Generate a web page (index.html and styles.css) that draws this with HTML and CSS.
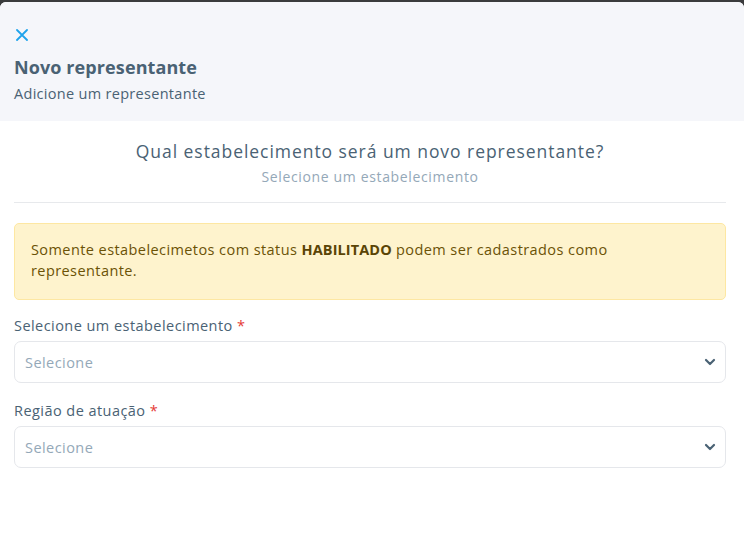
FILE: index.html
```html
<!DOCTYPE html>
<html>
<head>
    <title>Novo representante</title>
    <meta charset="UTF-8">
    <meta name="viewport" content="width=device-width, initial-scale=1.0">
    <link rel="stylesheet" href="styles.css">
</head>
<body>
    <div class="modal">
        <div class="modal-header">
            <button class="close-btn" aria-label="Fechar">
                <svg width="12" height="12" viewBox="0 0 12 12">
                    <path d="M1 1L11 11M11 1L1 11" stroke="currentColor" stroke-width="1.8" stroke-linecap="round"/>
                </svg>
            </button>
            <h1 class="modal-title">Novo representante</h1>
            <p class="modal-subtitle">Adicione um representante</p>
        </div>

        <div class="modal-body">
            <div class="step-head">
                <h2>Qual estabelecimento será um novo representante?</h2>
                <p>Selecione um estabelecimento</p>
            </div>

            <p class="alert">Somente estabelecimetos com status <strong>HABILITADO</strong> podem ser cadastrados como representante.</p>

            <div class="field">
                <label>Selecione um estabelecimento <span class="req">*</span></label>
                <div class="select">
                    <span>Selecione</span>
                    <svg width="12" height="8" viewBox="0 0 12 8">
                        <path d="M2 2L6 6L10 2" fill="none" stroke="currentColor" stroke-width="2.2" stroke-linecap="round" stroke-linejoin="round"/>
                    </svg>
                </div>
            </div>

            <div class="field">
                <label>Região de atuação <span class="req">*</span></label>
                <div class="select">
                    <span>Selecione</span>
                    <svg width="12" height="8" viewBox="0 0 12 8">
                        <path d="M2 2L6 6L10 2" fill="none" stroke="currentColor" stroke-width="2.2" stroke-linecap="round" stroke-linejoin="round"/>
                    </svg>
                </div>
            </div>
        </div>
    </div>
</body>
</html>
```

FILE: styles.css
```css
body {
    font-family: 'Open Sans', 'Noto Sans', sans-serif;
    margin: 0;
    background-color: #3a3b3d;
}

.modal {
    margin-top: 2px;
    background-color: white;
    border-radius: 6px 6px 0 0;
    min-height: 543px;
    overflow: hidden;
}

.modal-header {
    background-color: #f5f6fa;
    padding: 26px 14px 16px;
}

.close-btn {
    display: block;
    background: none;
    border: none;
    padding: 0;
    margin: 0 0 0 2px;
    height: 16px;
    color: #1fa3ec;
    cursor: pointer;
}

.modal-title {
    color: #4a6274;
    font-size: 18px;
    font-weight: 700;
    letter-spacing: 0.1px;
    margin: 10px 0 0;
    line-height: 26px;
}

.modal-subtitle {
    color: #4a6274;
    font-size: 14.5px;
    letter-spacing: 0.3px;
    margin: 3px 0 0;
    line-height: 22px;
}

.modal-body {
    padding: 0 18px 0 14px;
}

.step-head {
    text-align: center;
    padding: 17px 0 12px;
    border-bottom: 1px solid #e7e9ec;
}

.step-head h2 {
    color: #4a6274;
    font-size: 17.5px;
    font-weight: 500;
    letter-spacing: 0.95px;
    margin: 0;
    line-height: 26px;
}

.step-head p {
    color: #94a8b8;
    font-size: 14px;
    letter-spacing: 0.65px;
    margin: 0;
    line-height: 26px;
}

.alert {
    margin: 20px 0 0;
    background-color: #fef3cd;
    border: 1px solid #fde7a2;
    border-radius: 5px;
    padding: 15px 40px 18px 16px;
    color: #6b5206;
    font-size: 14.5px;
    letter-spacing: 0.42px;
    line-height: 21px;
}

.alert strong {
    color: #5a4405;
    letter-spacing: 0.1px;
}

.field {
    margin-top: 18px;
}

.alert + .field {
    margin-top: 16px;
}

.field label {
    display: block;
    color: #4a6274;
    font-size: 14.5px;
    font-weight: 500;
    letter-spacing: 0.45px;
    line-height: 20px;
    margin-bottom: 5px;
}

.req {
    color: #e53935;
}

.select {
    display: flex;
    align-items: center;
    justify-content: space-between;
    height: 40px;
    border: 1px solid #e5e7eb;
    border-radius: 7px;
    padding: 0 9px 0 10px;
    color: #94a8b8;
    font-size: 14.5px;
    letter-spacing: 0.45px;
}

.select svg {
    color: #4a6274;
}
```
